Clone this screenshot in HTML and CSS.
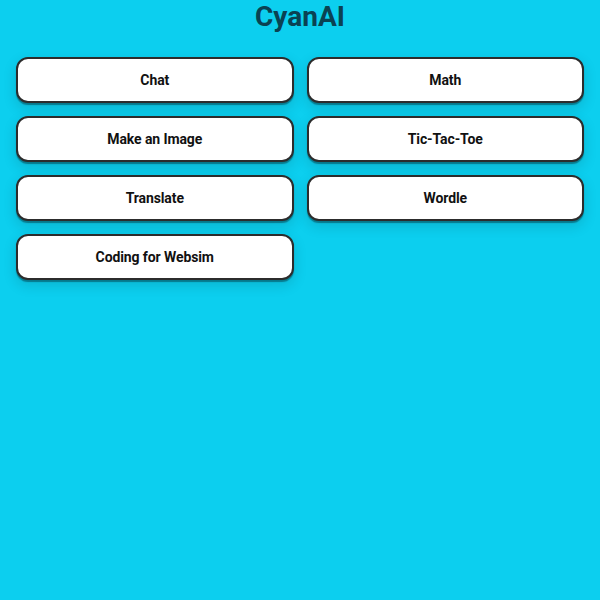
FILE: index.html
```html
<!DOCTYPE html>
<html lang="en">
<head>
<meta charset="utf-8">
<title>CyanAI</title>
<link rel="stylesheet" href="styles.css">
</head>
<body>
<h1 class="title">CyanAI</h1>
<div class="menu">
  <button class="menu-btn">Chat</button>
  <button class="menu-btn">Math</button>
  <button class="menu-btn">Make an Image</button>
  <button class="menu-btn">Tic-Tac-Toe</button>
  <button class="menu-btn">Translate</button>
  <button class="menu-btn">Wordle</button>
  <button class="menu-btn">Coding for Websim</button>
</div>
</body>
</html>
```
FILE: styles.css
```css
html, body {
  margin: 0;
  padding: 0;
  height: 100%;
}
body {
  background: #0ccfef;
  font-family: Roboto, "Liberation Sans", sans-serif;
}
.title {
  margin: 0 0 24px;
  text-align: center;
  font-size: 28px;
  font-weight: 700;
  line-height: 33px;
  color: #0a4253;
}
.menu {
  display: grid;
  grid-template-columns: 1fr 1fr;
  gap: 13px;
  padding: 0 16px;
}
.menu-btn {
  height: 46px;
  background: #fff;
  border: 2px solid #2c2c2c;
  border-radius: 12px;
  box-shadow: 0 2px 1px rgba(0,0,0,0.35), 0 5px 14px rgba(0,0,0,0.14);
  font-family: Roboto, "Liberation Sans", sans-serif;
  font-size: 14px;
  font-weight: 700;
  letter-spacing: -0.1px;
  color: #111;
  padding: 0;
}
```
